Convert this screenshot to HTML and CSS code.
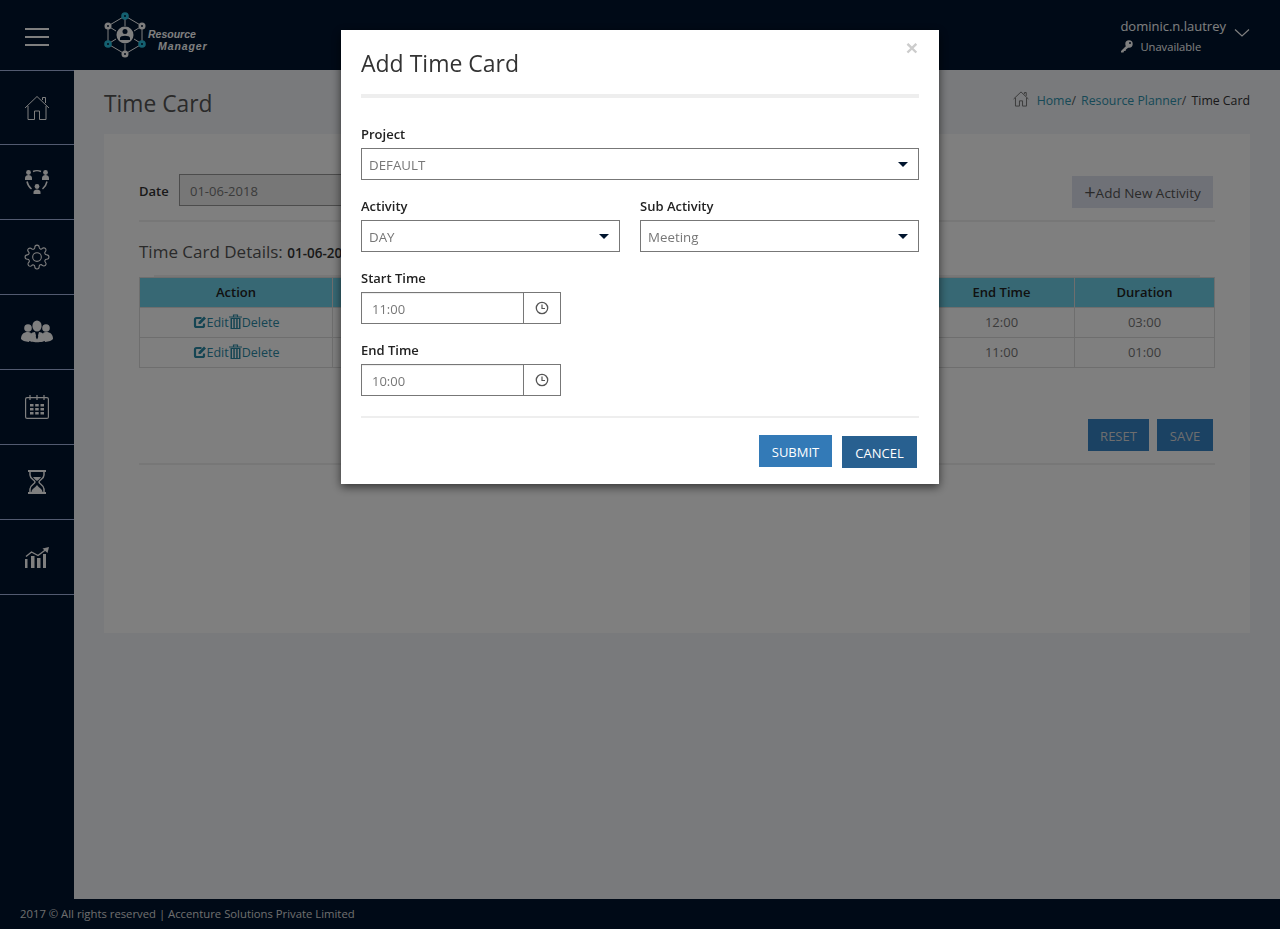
FILE: index.html
```html
<!DOCTYPE html>
<html lang="en">
<head>
  <meta charset="UTF-8">
  <title>Time Card</title>
  <link rel="stylesheet" href="styles.css">
</head>
<body>
  <div class="page">
    <header class="topbar">
      <div class="burger"><span></span><span></span><span></span></div>
      <div class="logo">
        <svg width="46" height="48" viewBox="0 0 46 48">
          <g stroke="#fff" stroke-width="1" fill="none">
            <path d="M23 5 L40 15 V33 L23 43 L6 33 V15 Z"/>
            <path d="M23 5 V15 M40 15 L32 20 M40 33 L32 28 M23 43 V33 M6 33 L14 28 M6 15 L14 20"/>
          </g>
          <circle cx="23" cy="24" r="8.500" fill="#fff"/>
          <circle cx="23" cy="20.500" r="2.500" fill="#00142e"/>
          <path d="M18 29 V27 C18 24 28 24 28 27 V29 Z" fill="#00142e"/>
          <g fill="#28c0e0">
            <circle cx="23" cy="5" r="3.800"/>
            <circle cx="40" cy="33" r="3.800"/>
            <circle cx="6" cy="33" r="3.800"/>
          </g>
          <g fill="#fff">
            <circle cx="40" cy="15" r="3.500"/>
            <circle cx="6" cy="15" r="3.500"/>
            <circle cx="23" cy="43" r="3.500"/>
          </g>
          <g fill="#00142e">
            <circle cx="23" cy="5" r="1"/>
            <circle cx="40" cy="33" r="1"/>
            <circle cx="6" cy="33" r="1"/>
            <circle cx="40" cy="15" r="1"/>
            <circle cx="6" cy="15" r="1"/>
            <circle cx="23" cy="43" r="1"/>
          </g>
        </svg>
        <div class="logo-text"><span>Resource</span><span class="logo-second">Manager</span></div>
      </div>
      <div class="user">
        <div>
          <div class="user-name">dominic.n.lautrey</div>
          <div class="user-status">
            <svg width="13" height="13" viewBox="0 0 13 13"><circle cx="9" cy="4" r="3.700" fill="#fff"/><circle cx="10" cy="3" r="1" fill="#00142e"/><path d="M7 5 L1 11 V12.500 H3.500 L4 11 H5.500 L6 9.500 L8.500 7.500 Z" fill="#fff"/></svg>
            <span>Unavailable</span>
          </div>
        </div>
        <svg class="user-arrow" width="16" height="10" viewBox="0 0 16 10"><path d="M1 1.500 L8 8 L15 1.500" fill="none" stroke="#fff" stroke-width="1.200"/></svg>
      </div>
    </header>

    <nav class="sidebar">
      <a class="nav-item">
        <svg width="26" height="26" viewBox="0 0 26 26" fill="none" stroke="#fff" stroke-width="1"><path d="M1 13 L13 1.500 L25 13 M4 11 V24.500 H10.500 V16 H15.500 V24.500 H22 V11 M18.500 5 V2.500 H21.500 V8"/></svg>
      </a>
      <a class="nav-item">
        <svg width="26" height="26" viewBox="0 0 26 26" fill="#fff"><circle cx="4.500" cy="3.500" r="2.400"/><path d="M1 11 V9 C1 5 8 5 8 9 V11 Z"/><circle cx="21.500" cy="3.500" r="2.400"/><path d="M18 11 V9 C18 5 25 5 25 9 V11 Z"/><circle cx="13" cy="17.500" r="2.400"/><path d="M9.500 25 V23 C9.500 19.500 16.500 19.500 16.500 23 V25 Z"/><path d="M9 2.500 C11 1.500 15 1.500 17 2.500 M3 12.500 C3.500 15 5 18 7.500 20 M23 12.500 C22.500 15 21 18 18.500 20" fill="none" stroke="#fff" stroke-width="1.500"/></svg>
      </a>
      <a class="nav-item">
        <svg width="26" height="26" viewBox="0 0 24 24" fill="none" stroke="#fff" stroke-width="1"><circle cx="12" cy="12" r="4"/><path d="M19.400 15a1.650 1.650 0 0 0 .33 1.820l.06.06a2 2 0 1 1-2.830 2.830l-.06-.06a1.650 1.650 0 0 0-2.900 1.170V21a2 2 0 1 1-4 0v-.09a1.650 1.650 0 0 0-2.820-1.110l-.06.06a2 2 0 1 1-2.830-2.830l.06-.06a1.650 1.650 0 0 0-1.170-2.900H3a2 2 0 1 1 0-4h.09a1.650 1.650 0 0 0 1.110-2.820l-.06-.06a2 2 0 1 1 2.830-2.830l.06.06a1.650 1.650 0 0 0 1.820.33H9a1.650 1.650 0 0 0 1-1.510V3a2 2 0 1 1 4 0v.09a1.650 1.650 0 0 0 2.820 1.110l.06-.06a2 2 0 1 1 2.830 2.830l-.06.06a1.650 1.650 0 0 0-.33 1.820V9a1.650 1.650 0 0 0 1.510 1H21a2 2 0 1 1 0 4h-.09a1.650 1.650 0 0 0-1.510 1z"/></svg>
      </a>
      <a class="nav-item">
        <svg width="32" height="24" viewBox="0 0 32 24" fill="#fff"><circle cx="7" cy="8" r="3.800"/><circle cx="25" cy="8" r="3.800"/><path d="M0 19 C0 13 4 12 7 12 C8 12 9 12.500 10 13 L8 22 C4 21.500 1 20.500 0 19 Z"/><path d="M32 19 C32 13 28 12 25 12 C24 12 23 12.500 22 13 L24 22 C28 21.500 31 20.500 32 19 Z"/><ellipse cx="16" cy="6" rx="4.600" ry="5.500"/><path d="M7 20 C7 14 11 12.500 14 12 L16 19 L18 12 C21 12.500 25 14 25 20 C23 23 9 23 7 20 Z"/><path d="M15.200 12.500 H16.800 L17.200 17 L16 19.500 L14.800 17 Z" fill="#00142e"/></svg>
      </a>
      <a class="nav-item">
        <svg width="24" height="24" viewBox="0 0 24 24"><rect x=".6" y="2.600" width="22.800" height="20.800" rx="1.500" fill="none" stroke="#fff" stroke-width="1.200"/><path d="M5 0 V5 M12 0 V5 M19 0 V5" stroke="#fff" stroke-width="1.200"/><g fill="#fff"><rect x="5" y="9" width="3.500" height="2.500"/><rect x="10.200" y="9" width="3.500" height="2.500"/><rect x="15.500" y="9" width="3.500" height="2.500"/><rect x="5" y="13" width="3.500" height="2.500"/><rect x="10.200" y="13" width="3.500" height="2.500"/><rect x="15.500" y="13" width="3.500" height="2.500"/><rect x="5" y="17" width="3.500" height="2.500"/><rect x="10.200" y="17" width="3.500" height="2.500"/><rect x="15.500" y="17" width="3.500" height="2.500"/></g></svg>
      </a>
      <a class="nav-item">
        <svg width="18" height="24" viewBox="0 0 18 24"><path d="M0 0 H18 V2 H0 Z M0 22 H18 V24 H0 Z" fill="#fff"/><path d="M2 2 V5 C2 9 7 10 7 12 C7 14 2 15 2 19 V22 M16 2 V5 C16 9 11 10 11 12 C11 14 16 15 16 19 V22" fill="none" stroke="#fff" stroke-width="1.500"/><path d="M5 7 H13 C12 9 10 10 9 11 C8 10 6 9 5 7 Z M3.500 22 C3.500 19 7 18 9 15 C11 18 14.500 19 14.500 22 Z" fill="#fff"/></svg>
      </a>
      <a class="nav-item">
        <svg width="24" height="21" viewBox="0 0 24 21"><path d="M0 12 H2.500 V21 H0 Z M6 9 H9.500 V21 H6 Z M12 11 H15.500 V21 H12 Z M18 7 H21 V21 H18 Z" fill="#fff"/><path d="M1 9.500 L6.500 5 L13 8.500 L21 2.500" fill="none" stroke="#fff" stroke-width="1.400"/><path d="M17.500 1.500 L24 0 L22.500 6 Z" fill="#fff"/></svg>
      </a>
    </nav>

    <main class="content">
      <div class="title-row">
        <h1>Time Card</h1>
        <div class="crumbs">
          <svg width="16" height="16" viewBox="0 0 26 26" fill="none" stroke="#777" stroke-width="1.600"><path d="M1 13 L13 1.500 L25 13 M4 11 V24.500 H10.500 V16 H15.500 V24.500 H22 V11 M18.500 5 V2.500 H21.500 V8"/></svg>
          <a class="crumb-home">Home</a>/ <a>Resource Planner</a>/ <span>Time Card</span>
        </div>
      </div>
      <section class="card">
        <div class="date-row">
          <label>Date</label>
          <input class="date-input" type="text" value="01-06-2018">
          <button class="add-btn"><span class="plus">+</span>Add New Activity</button>
        </div>
        <hr class="rule">
        <h2>Time Card Details: <b>01-06-2018</b></h2>
        <div class="table-edge"></div>
        <table>
          <thead>
            <tr>
              <th class="col-action">Action</th>
              <th></th>
              <th class="col-end">End Time</th>
              <th class="col-duration">Duration</th>
            </tr>
          </thead>
          <tbody>
            <tr>
              <td>
                <a class="row-link"><svg width="14" height="14" viewBox="0 0 14 14"><use href="#edit-icon"/></svg>Edit</a><a class="row-link"><svg width="13" height="15" viewBox="0 0 13 15"><use href="#trash-icon"/></svg>Delete</a>
              </td>
              <td></td><td>12:00</td><td>03:00</td>
            </tr>
            <tr>
              <td>
                <a class="row-link"><svg width="14" height="14" viewBox="0 0 14 14"><use href="#edit-icon"/></svg>Edit</a><a class="row-link"><svg width="13" height="15" viewBox="0 0 13 15"><use href="#trash-icon"/></svg>Delete</a>
              </td>
              <td></td><td>11:00</td><td>01:00</td>
            </tr>
          </tbody>
        </table>
        <div class="card-actions">
          <button class="dark-btn btn-reset">RESET</button>
          <button class="dark-btn btn-save">SAVE</button>
        </div>
        <hr class="rule rule-bottom">
      </section>
    </main>

    <footer class="footer">2017 © All rights reserved | Accenture Solutions Private Limited</footer>
  </div>

  <svg class="icon-defs" width="0" height="0">
    <symbol id="edit-icon" viewBox="0 0 14 14">
      <path d="M11 8.500 V10.500 C11 11.500 10.300 12 9.500 12 H3.500 C2.500 12 2 11.300 2 10.500 V4.500 C2 3.500 2.700 3 3.500 3 H8.500" fill="none" stroke="#2a8aa6" stroke-width="2.200"/>
      <path d="M5.500 7 L11 1.500 L13 3.500 L7.500 9 H5.500 Z" fill="#2a8aa6"/>
    </symbol>
    <symbol id="trash-icon" viewBox="0 0 13 15">
      <path d="M0 3 H13 M4.500 3 V1 H8.500 V3" fill="none" stroke="#2a8aa6" stroke-width="1.200"/>
      <path d="M1.500 4 H11.500 V15 H1.500 Z M3 5 V14 H4.300 V5 Z M5.800 5 V14 H7.200 V5 Z M8.700 5 V14 H10 V5 Z" fill="#2a8aa6" fill-rule="evenodd"/>
    </symbol>
    <symbol id="clock-icon" viewBox="0 0 14 14">
      <circle cx="7" cy="7" r="5.700" fill="none" stroke="#555" stroke-width="1.300"/>
      <path d="M7 3.500 V7.500 H10" fill="none" stroke="#555" stroke-width="1.200"/>
    </symbol>
  </svg>

  <div class="backdrop">
    <div class="modal">
      <button class="modal-close">×</button>
      <h3>Add Time Card</h3>
      <hr class="modal-rule">
      <div class="field">
        <label>Project</label>
        <div class="select-wrap">
          <select><option>DEFAULT</option></select>
        </div>
      </div>
      <div class="field-pair">
        <div class="field">
          <label>Activity</label>
          <div class="select-wrap">
            <select><option>DAY</option></select>
          </div>
        </div>
        <div class="field">
          <label>Sub Activity</label>
          <div class="select-wrap">
            <select><option>Meeting</option></select>
          </div>
        </div>
      </div>
      <div class="field">
        <label>Start Time</label>
        <div class="time-group">
          <input type="text" value="11:00">
          <span class="time-addon"><svg width="14" height="14" viewBox="0 0 14 14"><use href="#clock-icon"/></svg></span>
        </div>
      </div>
      <div class="field">
        <label>End Time</label>
        <div class="time-group">
          <input type="text" value="10:00">
          <span class="time-addon"><svg width="14" height="14" viewBox="0 0 14 14"><use href="#clock-icon"/></svg></span>
        </div>
      </div>
      <hr class="modal-foot-rule">
      <div class="modal-actions">
        <button class="btn-submit">SUBMIT</button>
        <button class="btn-cancel">CANCEL</button>
      </div>
    </div>
  </div>
</body>
</html>
```

FILE: styles.css
```css
* {
  box-sizing: border-box;
}

body {
  margin: 0;
  font-family: 'Open Sans', 'Noto Sans', sans-serif;
  font-size: 13px;
  color: #333;
  background-color: #f2f4f8;
}

.page {
  display: grid;
  grid-template-columns: 74px 1fr;
  grid-template-rows: 70px 1fr 30px;
  height: 929px;
  overflow: hidden;
}

/* top bar */
.topbar {
  grid-column: 1 / 3;
  display: flex;
  align-items: center;
  background-color: #00142e;
  color: #fff;
}

.burger {
  width: 74px;
  margin-top: 4px;
  display: flex;
  flex-direction: column;
  align-items: center;
  gap: 6px;
}

.burger span {
  width: 24px;
  height: 2px;
  background-color: #fff;
}

.logo {
  margin-left: 28px;
  display: flex;
  align-items: center;
}

.logo-text {
  display: flex;
  flex-direction: column;
  margin-top: 9px;
  font-family: 'Liberation Sans', sans-serif;
  font-size: 10.500px;
  font-weight: 700;
  font-style: italic;
  line-height: 12px;
}

.logo-second {
  margin-left: 10px;
  letter-spacing: 0.9px;
}

.user {
  margin-left: auto;
  margin-right: 30px;
  display: flex;
  align-items: center;
  gap: 8px;
}

.user-name {
  font-size: 13px;
  line-height: 20px;
}

.user-status {
  display: flex;
  align-items: center;
  gap: 7px;
  margin-top: 3px;
  font-size: 11.200px;
  line-height: 16px;
}

.user-arrow {
  margin-top: -4px;
}

/* side menu */
.sidebar {
  background-color: #00142e;
}

.nav-item {
  display: flex;
  align-items: center;
  justify-content: center;
  height: 75px;
  border-top: 1px solid #a4b4e0;
}

.nav-item:first-child {
  height: 74px;
}

.nav-item:last-child {
  border-bottom: 1px solid #a4b4e0;
  height: 76px;
}

/* main area */
.content {
  padding: 0 30px;
  min-width: 0;
}

.title-row {
  display: flex;
  justify-content: space-between;
  height: 64px;
}

h1 {
  margin: 18px 0 0;
  font-size: 22.800px;
  font-weight: 400;
  line-height: 32px;
  color: #555;
}

.crumbs {
  margin-top: 21px;
  display: flex;
  align-items: flex-start;
  font-size: 12.300px;
  line-height: 20px;
  word-spacing: 2px;
  white-space: pre;
  color: #555;
}

.crumbs svg {
  margin: 0 8px 0 0;
}

.crumbs a {
  word-spacing: 0;
  color: #2f93ae;
}

.crumbs span {
  word-spacing: 0;
  color: #333;
}

.card {
  height: 499px;
  padding: 40px 35px 0;
  background-color: #fff;
}

.date-row {
  display: flex;
  align-items: flex-start;
  height: 34px;
}

.date-row label {
  width: 40px;
  padding-top: 8px;
  font-weight: 600;
}

.date-input {
  width: 300px;
  height: 32px;
  padding: 2px 10px 0;
  border: 1px solid #999;
  background-color: #eee;
  font: inherit;
  color: #777;
}

.add-btn {
  margin: 2px 2px 0 auto;
  width: 141px;
  height: 32px;
  padding: 2px 0 0;
  border: 0;
  background-color: #dfe3ee;
  font: inherit;
  font-size: 13.500px;
  color: #555;
}

.plus {
  font-size: 20px;
  line-height: 14px;
  vertical-align: -1px;
}

.rule {
  margin: 12px 0 0;
  border: 0;
  border-top: 2px solid #eee;
}

h2 {
  margin: 18px 0 0;
  font-size: 17px;
  font-weight: 400;
  line-height: 24px;
  color: #555;
}

h2 b {
  font-size: 13.500px;
  font-weight: 600;
  color: #333;
}

.table-edge {
  margin: 10px 15px 0;
  height: 2px;
  background-color: #eee;
}

table {
  width: 100%;
  border-collapse: collapse;
  table-layout: fixed;
  text-align: center;
}

th, td {
  height: 30px;
  padding: 0 0 2px;
  border: 1px solid #ddd;
}

th {
  background-color: #6fd1e8;
  font-weight: 600;
  color: #222;
}

td {
  color: #777;
}

.col-action {
  width: 193px;
}

.col-end {
  width: 146px;
}

.col-duration {
  width: 140px;
}

.row-link {
  font-size: 12.500px;
  color: #2a8aa6;
}

.row-link svg {
  vertical-align: -2px;
}

.card-actions {
  margin-top: 51px;
  display: flex;
  justify-content: flex-end;
  gap: 8px;
  padding-right: 2px;
}

.dark-btn {
  height: 32px;
  padding: 2px 0 0;
  border: 0;
  background-color: #3784c6;
  font: inherit;
  color: #ddd;
}

.btn-reset {
  width: 61px;
}

.btn-save {
  width: 56px;
}

.rule-bottom {
  margin-top: 12px;
}

.footer {
  grid-column: 1 / 3;
  padding-left: 20px;
  background-color: #00142e;
  font-size: 11.300px;
  line-height: 30px;
  color: #ddd;
}

/* modal */
.icon-defs {
  position: absolute;
}

.backdrop {
  position: fixed;
  top: 0;
  left: 0;
  right: 0;
  bottom: 0;
  background-color: rgba(0, 0, 0, 0.5);
}

.modal {
  position: relative;
  width: 598px;
  height: 454px;
  margin: 30px 0 0 341px;
  padding: 0 20px;
  background-color: #fff;
  box-shadow: 0 3px 9px rgba(0, 0, 0, 0.6);
}

.modal-close {
  position: absolute;
  top: 7px;
  right: 21px;
  padding: 0;
  border: 0;
  background: none;
  font-size: 21px;
  line-height: 22px;
  font-weight: 700;
  color: #ccc;
}

h3 {
  margin: 0;
  padding-top: 17px;
  font-size: 23px;
  font-weight: 400;
  line-height: 32px;
  color: #333;
}

.modal-rule {
  margin: 15px 0 0;
  border: 0;
  border-top: 4px solid #eee;
}

.field label {
  display: block;
  height: 24px;
  padding-top: 2px;
  font-weight: 600;
  line-height: 16px;
  color: #222;
}

.modal-rule + .field {
  margin-top: 26px;
}

.field {
  margin-bottom: 16px;
}

.field-pair {
  display: grid;
  grid-template-columns: 259px 1fr;
  gap: 20px;
}

.select-wrap {
  position: relative;
}

.select-wrap::after {
  content: "";
  position: absolute;
  top: 14px;
  right: 11px;
  border-left: 5.500px solid transparent;
  border-right: 5.500px solid transparent;
  border-top: 5px solid #00142e;
}

select {
  display: block;
  width: 100%;
  height: 32px;
  padding: 2px 7px 0;
  border: 1px solid #777;
  border-radius: 0;
  background-color: #fff;
  appearance: none;
  font: inherit;
  font-size: 13.300px;
  color: #777;
}

.time-group {
  display: flex;
  width: 200px;
  height: 32px;
  border: 1px solid #777;
}

.time-group input {
  flex: 1;
  min-width: 0;
  padding: 2px 10px 0;
  border: 0;
  border-right: 1px solid #777;
  box-shadow: inset 0 1px 1px rgba(0, 0, 0, 0.075);
  font: inherit;
  color: #777;
}

.time-addon {
  display: flex;
  align-items: center;
  justify-content: center;
  width: 36px;
}

.modal-foot-rule {
  margin: 20px 0 0;
  border: 0;
  border-top: 2px solid #eee;
}

.modal-actions {
  margin-top: 17px;
  display: flex;
  justify-content: flex-end;
  align-items: flex-start;
  gap: 10px;
  padding-right: 2px;
}

.modal-actions button {
  height: 32px;
  padding: 2px 0 0;
  border: 0;
  font: inherit;
  color: #fff;
}

.btn-submit {
  width: 73px;
  background-color: #337ab7;
}

.btn-cancel {
  width: 75px;
  margin-top: 1px;
  background-color: #286090;
}
```
